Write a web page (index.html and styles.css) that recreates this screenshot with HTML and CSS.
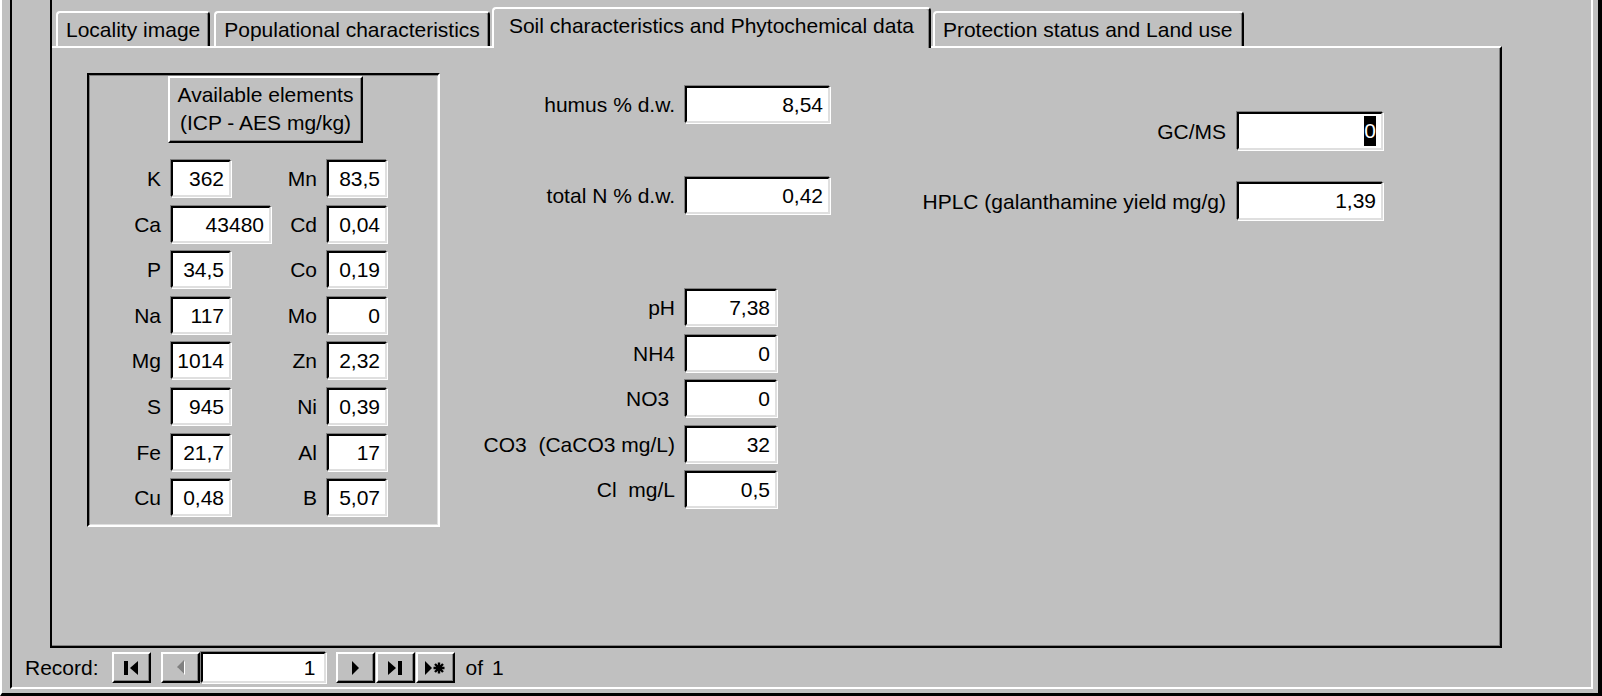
FILE: index.html
```html
<!DOCTYPE html>
<html lang="en">
<head>
    <meta charset="UTF-8">
    <meta name="viewport" content="width=device-width, initial-scale=1.0">
    <title>Soil characteristics and Phytochemical data</title>
    <link rel="stylesheet" href="styles.css">
</head>
<body>
    <div class="win">
        <div class="form">
            <div class="tabctl">
                <div class="tabs">
                    <div class="tab">Locality image</div>
                    <div class="tab">Populational characteristics</div>
                    <div class="tab on">Soil characteristics and Phytochemical data</div>
                    <div class="tab">Protection status and Land use</div>
                </div>
                <div class="panel">
                    <!-- ICP - AES elements -->
                    <div class="group">
                        <div class="head">Available elements<br>(ICP - AES mg/kg)</div>
                        <div class="elems">
                            <span class="lbl">K</span><span class="field w60">362</span>
                            <span class="lbl">Mn</span><span class="field">83,5</span>
                            <span class="lbl">Ca</span><span class="field w100">43480</span>
                            <span class="lbl">Cd</span><span class="field">0,04</span>
                            <span class="lbl">P</span><span class="field w60">34,5</span>
                            <span class="lbl">Co</span><span class="field">0,19</span>
                            <span class="lbl">Na</span><span class="field w60">117</span>
                            <span class="lbl">Mo</span><span class="field">0</span>
                            <span class="lbl">Mg</span><span class="field w60">1014</span>
                            <span class="lbl">Zn</span><span class="field">2,32</span>
                            <span class="lbl">S</span><span class="field w60">945</span>
                            <span class="lbl">Ni</span><span class="field">0,39</span>
                            <span class="lbl">Fe</span><span class="field w60">21,7</span>
                            <span class="lbl">Al</span><span class="field">17</span>
                            <span class="lbl">Cu</span><span class="field w60">0,48</span>
                            <span class="lbl">B</span><span class="field">5,07</span>
                        </div>
                    </div>

                    <div class="mid">
                        <div class="row"><span class="lbl">humus % d.w.</span><span class="field wide">8,54</span></div>
                        <div class="row far"><span class="lbl">total N % d.w.</span><span class="field wide">0,42</span></div>
                        <div class="row farther"><span class="lbl">pH</span><span class="field">7,38</span></div>
                        <div class="row"><span class="lbl">NH4</span><span class="field">0</span></div>
                        <div class="row"><span class="lbl">NO3&nbsp;</span><span class="field">0</span></div>
                        <div class="row"><span class="lbl">CO3&nbsp; (CaCO3 mg/L)</span><span class="field">32</span></div>
                        <div class="row"><span class="lbl">Cl&nbsp; mg/L</span><span class="field">0,5</span></div>
                    </div>

                    <div class="side">
                        <div class="row"><span class="lbl">GC/MS</span><span class="field"><span class="sel">0</span></span></div>
                        <div class="row far"><span class="lbl">HPLC (galanthamine yield mg/g)</span><span class="field">1,39</span></div>
                    </div>
                </div>
            </div>

            <div class="rec">
                <span class="rec-txt">Record:</span>
                <span class="nbtn">
                    <svg width="16" height="14" viewBox="0 0 16 14"><rect x="1" y="0" width="4" height="14"/><path d="M15 0V14L7 7Z"/></svg>
                </span>
                <span class="nbtn">
                    <svg width="11" height="15" viewBox="0 0 11 15"><path d="M10 1V15L3 8Z" fill="#fff"/><path d="M9 0V14L2 7Z" fill="#808080"/></svg>
                </span>
                <span class="field nav">1</span>
                <span class="nbtn">
                    <svg width="10" height="14" viewBox="0 0 10 14"><path d="M2 0V14L9 7Z"/></svg>
                </span>
                <span class="nbtn">
                    <svg width="16" height="14" viewBox="0 0 16 14"><path d="M1 0V14L9 7Z"/><rect x="11" y="0" width="4" height="14"/></svg>
                </span>
                <span class="nbtn">
                    <svg width="22" height="14" viewBox="0 0 22 14"><path d="M1 0V14L8 7Z"/><path d="M15 1.5V12.5M9.5 7H20.5M11 3L19 11M11 11L19 3" stroke="#000" stroke-width="2.4"/></svg>
                </span>
                <span class="rec-of">of 1</span>
            </div>
        </div>
    </div>
</body>
</html>
```

FILE: styles.css
```css
* {
    box-sizing: border-box;
}

body {
    margin: 0;
    background: #c0c0c0;
    font-family: "Liberation Sans", Arial, sans-serif;
    font-size: 21px;
    color: #000;
}

.win {
    display: flex;
    height: 696px;
    border-left: 2px solid #fff;
    border-right: 4px solid #000;
    border-bottom: 3px solid #000;
    padding: 0 5px 4px 8px;
}

.form {
    flex: 1;
    display: flex;
    flex-direction: column;
    border-left: 2px solid #000;
    border-right: 2px solid #fff;
    border-bottom: 2px solid #fff;
}

/* tab control */
.tabctl {
    display: flex;
    flex-direction: column;
    width: 1452px;
    height: 648px;
    margin-left: 38px;
    border-left: 2px solid #000;
}

.tabs {
    display: flex;
    align-items: flex-end;
    height: 46px;
    padding-left: 4px;
}

.tab {
    padding: 5px 8px 4px;
    line-height: 24px;
    white-space: nowrap;
    margin-right: 4px;
    border: 2px solid;
    border-color: #fff #000 transparent #fff;
    border-bottom: 0;
    border-radius: 4px 4px 0 0;
    box-shadow: inset -1px 0 #808080;
}

.tab.on {
    position: relative;
    z-index: 1;
    background: #c0c0c0;
    padding: 5px 15px 10px;
    margin: 0 2px -2px -2px;
}

.tab:last-child {
    padding-right: 10px;
}

.panel {
    flex: 1;
    display: flex;
    align-items: flex-start;
    border-top: 2px solid #fff;
    border-right: 2px solid #000;
    border-bottom: 2px solid #000;
    box-shadow: inset -1px -1px #808080;
}

/* fields */
.field {
    display: block;
    height: 37px;
    line-height: 33px;
    text-align: right;
    padding-right: 5px;
    background: #fff;
    border: 2px solid;
    border-color: #000 #dfdfdf #dfdfdf #000;
    box-shadow: -1px -1px #808080, 1px 1px #fff;
    white-space: nowrap;
}

.lbl {
    text-align: right;
    line-height: 37px;
    white-space: nowrap;
}

.sel {
    display: inline-block;
    background: #000;
    color: #fff;
    line-height: 30px;
}

/* elements group */
.group {
    width: 353px;
    height: 454px;
    margin: 25px 0 0 35px;
    border: 2px solid;
    border-color: #000 #fff #fff #000;
    box-shadow: inset 1px 1px #808080, inset -1px -1px #dfdfdf;
}

.head {
    width: 195px;
    margin: 1px 0 0 79px;
    padding: 3px 4px 4px;
    line-height: 28px;
    text-align: center;
    border: 2px solid;
    border-color: #fff #000 #000 #fff;
    box-shadow: inset -1px -1px #808080;
}

.elems {
    display: grid;
    grid-template-columns: 71px 100px 36px 60px;
    grid-auto-rows: 37px;
    column-gap: 10px;
    row-gap: 8.6px;
    margin-top: 17px;
    padding-left: 1px;
}

.elems .w60 {
    width: 60px;
}

.elems .w100 {
    width: 100px;
}

/* middle and right columns */
.row {
    display: flex;
    align-items: center;
    height: 37px;
}

.row + .row {
    margin-top: 8.5px;
}

.mid {
    margin: 38px 0 0 40px;
}

.mid .lbl {
    width: 195px;
    margin-right: 10px;
}

.mid .field {
    width: 92px;
}

.mid .field.wide {
    width: 145px;
}

.mid .row.far {
    margin-top: 54px;
}

.mid .row.farther {
    margin-top: 75px;
}

.side {
    margin: 64px 0 0 90px;
}

.side .row {
    height: 38px;
}

.side .row.far {
    margin-top: 32px;
}

.side .lbl {
    width: 306px;
    margin-right: 11px;
}

.side .field {
    width: 146px;
    height: 38px;
    line-height: 34px;
}

/* record navigation */
.rec {
    flex: 1;
    display: flex;
    align-items: center;
    padding-left: 13px;
}

.rec-txt {
    margin-right: 13px;
}

.nbtn {
    display: flex;
    align-items: center;
    justify-content: center;
    width: 39px;
    height: 31px;
    margin-right: 1px;
    border: 2px solid;
    border-color: #fff #000 #000 #fff;
    box-shadow: inset -1px -1px #808080;
}

.nbtn:nth-of-type(2) {
    margin-right: 10px;
}

.field.nav {
    width: 125px;
    height: 31px;
    line-height: 27px;
    padding-right: 8px;
    margin-right: 10px;
}

.rec-of {
    margin-left: 10px;
    word-spacing: 3px;
}
```
